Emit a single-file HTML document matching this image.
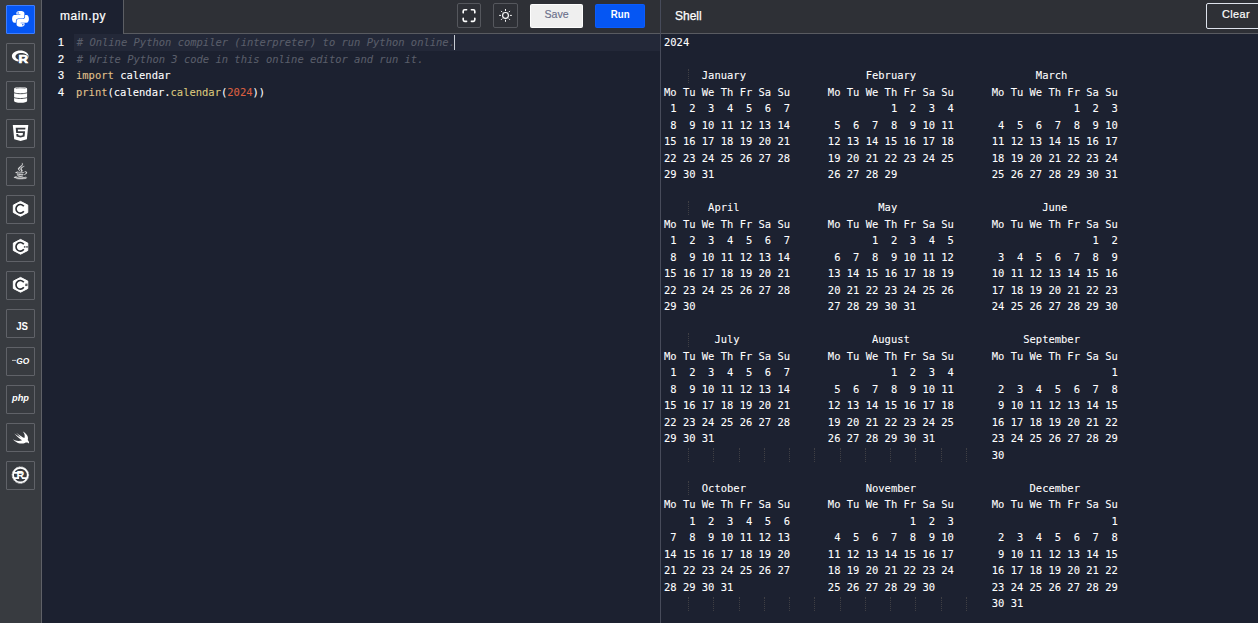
<!DOCTYPE html>
<html lang="en">
<head>
<meta charset="utf-8">
<title>Online Python Compiler</title>
<style>
*{box-sizing:border-box;margin:0;padding:0}
html,body{width:1258px;height:623px;overflow:hidden;background:#1c2130}
body{position:relative;font-family:"Liberation Sans",sans-serif;color:#fff}
.side{position:absolute;left:0;top:0;width:42px;height:623px;background:#383b40;border-right:1px solid #5f6167}
.ib{position:absolute;left:6px;width:29px;height:29px;border:1px solid #606268;border-radius:1px;display:block}
.ib.act{background:#0556f3;border-color:#3d7eff}
.ib svg{position:absolute;left:-1px;top:-1px;width:29px;height:29px}
.ib span{position:absolute;left:0;right:0;text-align:center;color:#fff}
.hdr{position:absolute;left:42px;top:0;width:1216px;height:34px;background:#2e3036;border-bottom:1px solid #595b61}
.tab{position:absolute;left:42px;top:0;width:82px;height:34px;background:#1c2130;border-right:1px solid #5c5e64}
.tab span{position:absolute;left:18px;top:8px;font-size:12px;letter-spacing:.56px;line-height:16px;color:#fff;-webkit-text-stroke-width:.2px}
.vdiv{position:absolute;left:660px;top:0;width:1px;height:623px;background:#474b5a}
.sq{position:absolute;top:3px;height:25px;border:1px solid #55575d;border-radius:2px}
.btn{position:absolute;top:4px;height:24px;border-radius:1.500px;text-align:center;line-height:24px}
.save{left:530px;width:53px;background:#efefef;border:1px solid #fdfdfd;color:#6c6f8b;font-size:10.600px;line-height:19.500px;-webkit-text-stroke-width:.15px}
.run{left:595px;width:50px;background:#0556f3;border:1px solid #0a5cfd;color:#fff;font-weight:bold;font-size:11.500px;line-height:19.500px}
.run span{display:inline-block;transform:scaleX(.84)}
.shell-t{position:absolute;left:675px;top:7.800px;font-size:12px;line-height:16px;color:#fff;-webkit-text-stroke-width:.25px}
.clear{position:absolute;left:1206px;top:3px;width:60px;height:26px;border:1px solid #dde2ec;border-radius:2px;font-size:10.800px;letter-spacing:.42px;line-height:21.400px;padding-left:15px;color:#fff;-webkit-text-stroke-width:.2px}
.mono{font-family:"DejaVu Sans Mono","Liberation Mono",monospace;font-size:10.48px;line-height:16.5px;white-space:pre;-webkit-text-stroke-width:.08px}
.gut{position:absolute;left:42px;top:34px;width:32px;font-size:10.800px;line-height:16.500px;color:#fff}
.gut span{-webkit-text-stroke-width:.2px}
.gut div{height:16.5px;padding-left:16px}
.actl{position:absolute;left:74px;top:34px;width:586px;height:16.5px;background:#232838}
.code{position:absolute;left:76px;top:34px}
.code div,.out div{height:16.5px}
.c{color:#5a5e6a;font-style:italic;position:relative;left:.8px}
.k{color:#e2c28c}
.f{color:#dcc97c}
.n{color:#dd6040}
.cur{position:absolute;left:454px;top:35px;width:1px;height:15px;background:#c8ccd4}
.out{position:absolute;left:664px;top:34px;color:#fff}
.g{position:absolute;width:0;height:14px;margin:1.500px 0 0 -1px;border-left:1px dotted #3f3f44}
</style>
</head>
<body>
<div class="side">
  <a class="ib act" style="top:5px"><svg viewBox="0 0 29 29"><path fill="#fff"  transform="translate(6.100 4.871) scale(0.03750 0.03527)" d="M439.8 200.5c-7.700-30.900-22.300-54.200-53.400-54.200h-40.100v47.400c0 36.800-31.200 67.800-66.800 67.800H172.700c-29.200 0-53.400 25-53.400 54.300v101.800c0 29 25.200 46 53.400 54.300 33.800 9.900 66.300 11.700 106.800 0 26.900-7.800 53.400-23.500 53.400-54.300v-40.700H226.200v-13.600h160.200c31.100 0 42.600-21.700 53.400-54.200 11.200-33.500 10.700-65.700 0-108.600zM286.200 404c11.100 0 20.100 9.100 20.100 20.300 0 11.300-9 20.400-20.100 20.400-11 0-20.100-9.200-20.100-20.400.1-11.300 9.100-20.300 20.100-20.300zM167.800 248.100h106.800c29.700 0 53.400-24.500 53.400-54.300V91.900c0-29-24.400-50.700-53.400-55.600-35.800-5.900-74.700-5.600-106.800.1-45.200 8-53.400 24.700-53.400 55.600v40.700h106.900v13.600h-147c-31.100 0-58.300 18.700-66.800 54.200-9.800 40.700-10.200 66.100 0 108.600 7.600 31.600 25.700 54.200 56.800 54.200H101v-48.800c0-35.300 30.500-66.400 66.800-66.400zm-6.700-142.600c-11.100 0-20.100-9.100-20.100-20.300.1-11.300 9-20.400 20.100-20.400 11 0 20.100 9.200 20.100 20.400s-9 20.300-20.100 20.300z"/></svg></a>
  <a class="ib" style="top:43px"><svg viewBox="0 0 29 29"><path fill="#fff" fill-rule="evenodd" d="M14.250 7.500c4.600 0 8.350 2.500 8.350 5.600s-3.750 5.600-8.350 5.600S5.900 16.200 5.900 13.100s3.750-5.600 8.350-5.600zm1 2.400c-3.200 0-5.800 1.550-5.800 3.500s2.600 3.500 5.800 3.500 5.800-1.550 5.800-3.500-2.600-3.500-5.800-3.500z"/><text x="12.500" y="19.900" font-family="Liberation Sans,sans-serif" font-weight="bold" font-size="11.700" fill="#fff" stroke="#383b40" stroke-width="1.600" paint-order="stroke" textLength="9.600" lengthAdjust="spacingAndGlyphs">R</text><text x="12.500" y="19.900" font-family="Liberation Sans,sans-serif" font-weight="bold" font-size="11.700" fill="#fff" stroke="#fff" stroke-width=".5" textLength="9.600" lengthAdjust="spacingAndGlyphs" aria-hidden="true">R</text></svg></a>
  <a class="ib" style="top:81px"><svg viewBox="0 0 29 29"><path fill="#fff" d="M8.100 7.700c0-1 2.900-1.800 6.500-1.800s6.500.8 6.500 1.800v12.300c0 1-2.900 1.800-6.500 1.800s-6.500-.8-6.500-1.800z"/><path fill="none" stroke="#383b40" stroke-width=".9" d="M7.500 11c0 1 3.100 1.700 7.100 1.700s7.100-.7 7.100-1.700M7.500 15.800c0 1 3.100 1.700 7.100 1.700s7.100-.7 7.100-1.700"/><path fill="none" stroke="#383b40" stroke-width=".7" d="M9.800 7.400c1.100-.4 2.800-.6 4.800-.6s3.700.2 4.800.6"/></svg></a>
  <a class="ib" style="top:119px"><svg viewBox="0 0 29 29"><path fill="#fff"  transform="translate(6.800 4.750) scale(0.04036 0.03594)" d="M0 32l34.900 395.800L191.500 480l157.600-52.200L384 32H0zm308.200 127.900H124.400l4.100 49.400h175.600l-13.600 148.400-97.900 27v.3h-1.100l-98.700-27.300-6-75.800h47.700L138 320l53.500 14.500 53.700-14.500 6-62.200H84.300L71.500 112.200h241.600l-4.900 47.700z"/></svg></a>
  <a class="ib" style="top:157px"><svg viewBox="0 0 29 29"><path fill="#f0f0f0" stroke="#f0f0f0" stroke-width="9" transform="translate(7.993 5.900) scale(0.03378 0.03145)" d="M277.740 312.900c9.800-6.700 23.400-12.500 23.400-12.500s-38.700 7-77.200 10.200c-47.100 3.900-97.700 4.700-123.100 1.300-60.100-8 33-30.100 33-30.100s-36.100-2.400-80.600 19c-52.500 25.400 130 37 224.500 12.100zm-85.400-32.100c-19-42.700-83.100-80.200 0-145.800C296 53.200 242.840 0 242.840 0c21.500 84.500-75.600 110.100-110.700 162.600-23.900 35.900 11.700 74.400 60.200 118.200zm114.600-176.200c.1 0-175.200 43.800-91.500 140.200 24.700 28.400-6.500 54-6.500 54s62.700-32.400 33.900-72.900c-26.900-37.800-47.500-56.600 64.100-121.300zm-6.100 270.500a12.190 12.190 0 0 1-2 2.600c128.300-33.700 81.100-118.900 19.800-97.300a17.330 17.330 0 0 0-8.200 6.300 70.450 70.450 0 0 1 11-3c31-6.500 75.500 41.500-20.600 91.400zM348 437.400s14.500 11.900-15.900 21.200c-57.900 17.500-240.800 22.800-291.600.7-18.300-7.900 16-19 26.800-21.300 11.200-2.400 17.700-2 17.700-2-20.300-14.300-131.300 28.100-56.400 40.200C232.840 509.400 401 461.300 348 437.400zM124.440 396c-78.700 22 47.900 67.400 148.100 24.500a185.890 185.890 0 0 1-28.200-13.800c-44.700 8.500-65.400 9.100-106 4.500-33.500-3.800-13.900-15.200-13.900-15.200zm179.800 97.200c-78.700 14.800-175.800 13.100-233.300 3.600 0-.1 11.800 9.700 72.400 13.600 92.200 5.900 233.800-3.300 237.100-46.900 0 0-6.400 16.500-76.200 29.700zM260.640 353c-59.200 11.400-93.500 11.100-136.800 6.600-33.500-3.500-11.600-19.700-11.600-19.700-86.800 28.800 48.200 61.400 169.500 25.900a60.370 60.370 0 0 1-21.100-12.800z"/></svg></a>
  <a class="ib" style="top:195px"><svg viewBox="0 0 29 29"><path fill="#fff" stroke="#fff" stroke-width="1" stroke-linejoin="round" d="M14.550 6.400l7.200 3.700v7.400l-7.200 3.700-7.200-3.700v-7.400z"/><path fill="none" stroke="#2b2e33" stroke-width="1.650" d="M17.800 11.300a4.300 4.300 0 1 0 0 5"/></svg></a>
  <a class="ib" style="top:233px"><svg viewBox="0 0 29 29"><path fill="#fff" stroke="#fff" stroke-width="1" stroke-linejoin="round" d="M14.550 6.400l7.200 3.700v7.400l-7.200 3.700-7.200-3.700v-7.400z"/><path fill="none" stroke="#2b2e33" stroke-width="1.650" d="M17.800 11.300a4.300 4.300 0 1 0 0 5"/><path fill="none" stroke="#2b2e33" stroke-width=".7" d="M17.800 13.900h1.800M18.700 13v1.800M20.100 13.900h1.800M21 13v1.800"/></svg></a>
  <a class="ib" style="top:271px"><svg viewBox="0 0 29 29"><path fill="#fff" stroke="#fff" stroke-width="1" stroke-linejoin="round" d="M14.550 6.400l7.200 3.700v7.400l-7.200 3.700-7.200-3.700v-7.400z"/><path fill="none" stroke="#2b2e33" stroke-width="1.650" d="M17.800 11.300a4.300 4.300 0 1 0 0 5"/><path fill="none" stroke="#2b2e33" stroke-width=".6" d="M19.300 13.300h2.200M19.200 14.400h2.200M20 12.600l-.2 2.500M21 12.600l-.2 2.500"/></svg></a>
  <a class="ib" style="top:309px"><svg viewBox="0 0 29 29"><text x="10.200" y="20.700" font-family="Liberation Sans,sans-serif" font-weight="bold" font-size="10.200" fill="#fff" textLength="11.800" lengthAdjust="spacingAndGlyphs">JS</text></svg></a>
  <a class="ib" style="top:347px"><svg viewBox="0 0 29 29"><path stroke="#e4e4e4" stroke-width=".8" fill="none" d="M6 13.400h4.200"/><text x="10.200" y="17.100" font-family="Liberation Sans,sans-serif" font-weight="bold" font-style="italic" font-size="8.800" fill="#fff" textLength="13" lengthAdjust="spacingAndGlyphs">GO</text></svg></a>
  <a class="ib" style="top:385px"><svg viewBox="0 0 29 29"><text x="6" y="15.900" font-family="Liberation Sans,sans-serif" font-weight="bold" font-style="italic" font-size="9.600" fill="#fff" textLength="17" lengthAdjust="spacingAndGlyphs">php</text></svg></a>
  <a class="ib" style="top:423px"><svg viewBox="0 0 29 29"><path fill="#fff"  transform="translate(4.629 4.823) scale(0.04824 0.03969)" d="M378.12 397.09c-20-38.930-57.230-29.270-76.310-19.470-1.720 1-3.480 2-5.250 3l-.420.250c-39.500 21-92.530 22.540-145.850-.380A234.640 234.640 0 0 1 45 290.120a230.630 230.630 0 0 0 39.170 23.370c56.360 26.400 113 24.490 153 0-57-43.850-104.600-101-141.090-147.220a197.090 197.090 0 0 1-18.780-25.900c43.700 40 112.700 90.220 137.480 104.120-52.570-55.490-98.890-123.940-96.720-121.740 82.790 83.420 159.180 130.590 159.180 130.590 2.880 1.580 5 2.850 6.730 4a127.440 127.440 0 0 0 4.160-12.470c13.220-48.330-1.660-103.580-35.310-149.200C329.610 141.750 375 229.340 356.400 303.420c-.440 1.730-.950 3.400-1.440 5.090 38.520 47.400 28.040 98.170 23.130 88.590z"/></svg></a>
  <a class="ib" style="top:461px"><svg viewBox="0 0 29 29"><circle cx="14.400" cy="14.100" r="7.300" fill="none" stroke="#fff" stroke-width="1.700"/><circle cx="14.400" cy="14.100" r="8.200" fill="none" stroke="#fff" stroke-width=".9" stroke-dasharray="1 .61"/><text x="10.600" y="18" font-family="Liberation Sans,sans-serif" font-weight="bold" font-size="10.800" fill="#fff">R</text><path fill="#fff" d="M8 11.100h8v1.600H8zM8 16.300h5v1.600H8zM16.500 16.300h4v1.600h-4z"/></svg></a>
</div>
<div class="hdr"></div>
<div class="tab"><span>main.py</span></div>
<div class="sq" style="left:457px;width:24px"><svg viewBox="0 0 24 25" width="24" height="25" style="position:absolute;left:-1px;top:-1px"><path fill="none" stroke="#fff" stroke-width="1.650" stroke-linecap="round" stroke-linejoin="round" d="M6.200 9.800V8.200a1.500 1.500 0 0 1 1.500-1.500h1.900M14.400 6.700h1.900a1.500 1.500 0 0 1 1.500 1.500v1.600M17.800 15.200v1.600a1.500 1.500 0 0 1-1.500 1.500h-1.900M9.600 18.300H7.700a1.500 1.500 0 0 1-1.500-1.500v-1.600"/></svg></div>
<div class="sq" style="left:493px;width:25px"><svg viewBox="0 0 25 25" width="25" height="25" style="position:absolute;left:-1px;top:-1px"><g fill="none" stroke="#fff" stroke-linecap="round"><circle cx="12.500" cy="12.400" r="2.900" stroke-width="1.150"/><path stroke-width=".95" d="M12.500 6.400v1.200M12.500 17.200v1.200M6.500 12.400h1.200M17.300 12.400h1.200M8.300 8.200l.7.700M16 15.900l.7.700M8.300 16.600l.7-.7M16 8.900l.7-.7"/></g></svg></div>
<div class="btn save">Save</div>
<div class="btn run"><span>Run</span></div>
<div class="shell-t">Shell</div>
<div class="clear">Clear</div>
<div class="vdiv"></div>
<div class="gut"><div><span>1</span></div><div><span>2</span></div><div><span>3</span></div><div><span>4</span></div></div>
<div class="actl"></div>
<div class="code mono"><div class="c"># Online Python compiler (interpreter) to run Python online.</div><div class="c"># Write Python 3 code in this online editor and run it.</div><div><span class="k">import</span> calendar</div><div><span class="k">print</span>(calendar.<span class="f">calendar</span>(<span class="n">2024</span>))</div></div>
<div class="cur"></div>
<div class="out mono"><i class="g" style="left:25.24px;top:33.00px"></i><i class="g" style="left:25.24px;top:165.00px"></i><i class="g" style="left:25.24px;top:297.00px"></i><i class="g" style="left:25.24px;top:412.50px"></i><i class="g" style="left:50.48px;top:412.50px"></i><i class="g" style="left:75.72px;top:412.50px"></i><i class="g" style="left:100.96px;top:412.50px"></i><i class="g" style="left:126.20px;top:412.50px"></i><i class="g" style="left:151.44px;top:412.50px"></i><i class="g" style="left:176.68px;top:412.50px"></i><i class="g" style="left:201.92px;top:412.50px"></i><i class="g" style="left:227.16px;top:412.50px"></i><i class="g" style="left:252.40px;top:412.50px"></i><i class="g" style="left:277.64px;top:412.50px"></i><i class="g" style="left:302.88px;top:412.50px"></i><i class="g" style="left:25.24px;top:445.50px"></i><i class="g" style="left:25.24px;top:561.00px"></i><i class="g" style="left:50.48px;top:561.00px"></i><i class="g" style="left:75.72px;top:561.00px"></i><i class="g" style="left:100.96px;top:561.00px"></i><i class="g" style="left:126.20px;top:561.00px"></i><i class="g" style="left:151.44px;top:561.00px"></i><i class="g" style="left:176.68px;top:561.00px"></i><i class="g" style="left:201.92px;top:561.00px"></i><i class="g" style="left:227.16px;top:561.00px"></i><i class="g" style="left:252.40px;top:561.00px"></i><i class="g" style="left:277.64px;top:561.00px"></i><i class="g" style="left:302.88px;top:561.00px"></i><div class="ln">2024</div><div class="ln"></div><div class="ln">      January                   February                   March</div><div class="ln">Mo Tu We Th Fr Sa Su      Mo Tu We Th Fr Sa Su      Mo Tu We Th Fr Sa Su</div><div class="ln"> 1  2  3  4  5  6  7                1  2  3  4                   1  2  3</div><div class="ln"> 8  9 10 11 12 13 14       5  6  7  8  9 10 11       4  5  6  7  8  9 10</div><div class="ln">15 16 17 18 19 20 21      12 13 14 15 16 17 18      11 12 13 14 15 16 17</div><div class="ln">22 23 24 25 26 27 28      19 20 21 22 23 24 25      18 19 20 21 22 23 24</div><div class="ln">29 30 31                  26 27 28 29               25 26 27 28 29 30 31</div><div class="ln"></div><div class="ln">       April                      May                       June</div><div class="ln">Mo Tu We Th Fr Sa Su      Mo Tu We Th Fr Sa Su      Mo Tu We Th Fr Sa Su</div><div class="ln"> 1  2  3  4  5  6  7             1  2  3  4  5                      1  2</div><div class="ln"> 8  9 10 11 12 13 14       6  7  8  9 10 11 12       3  4  5  6  7  8  9</div><div class="ln">15 16 17 18 19 20 21      13 14 15 16 17 18 19      10 11 12 13 14 15 16</div><div class="ln">22 23 24 25 26 27 28      20 21 22 23 24 25 26      17 18 19 20 21 22 23</div><div class="ln">29 30                     27 28 29 30 31            24 25 26 27 28 29 30</div><div class="ln"></div><div class="ln">        July                     August                  September</div><div class="ln">Mo Tu We Th Fr Sa Su      Mo Tu We Th Fr Sa Su      Mo Tu We Th Fr Sa Su</div><div class="ln"> 1  2  3  4  5  6  7                1  2  3  4                         1</div><div class="ln"> 8  9 10 11 12 13 14       5  6  7  8  9 10 11       2  3  4  5  6  7  8</div><div class="ln">15 16 17 18 19 20 21      12 13 14 15 16 17 18       9 10 11 12 13 14 15</div><div class="ln">22 23 24 25 26 27 28      19 20 21 22 23 24 25      16 17 18 19 20 21 22</div><div class="ln">29 30 31                  26 27 28 29 30 31         23 24 25 26 27 28 29</div><div class="ln">                                                    30</div><div class="ln"></div><div class="ln">      October                   November                  December</div><div class="ln">Mo Tu We Th Fr Sa Su      Mo Tu We Th Fr Sa Su      Mo Tu We Th Fr Sa Su</div><div class="ln">    1  2  3  4  5  6                   1  2  3                         1</div><div class="ln"> 7  8  9 10 11 12 13       4  5  6  7  8  9 10       2  3  4  5  6  7  8</div><div class="ln">14 15 16 17 18 19 20      11 12 13 14 15 16 17       9 10 11 12 13 14 15</div><div class="ln">21 22 23 24 25 26 27      18 19 20 21 22 23 24      16 17 18 19 20 21 22</div><div class="ln">28 29 30 31               25 26 27 28 29 30         23 24 25 26 27 28 29</div><div class="ln">                                                    30 31</div></div>
</body>
</html>
